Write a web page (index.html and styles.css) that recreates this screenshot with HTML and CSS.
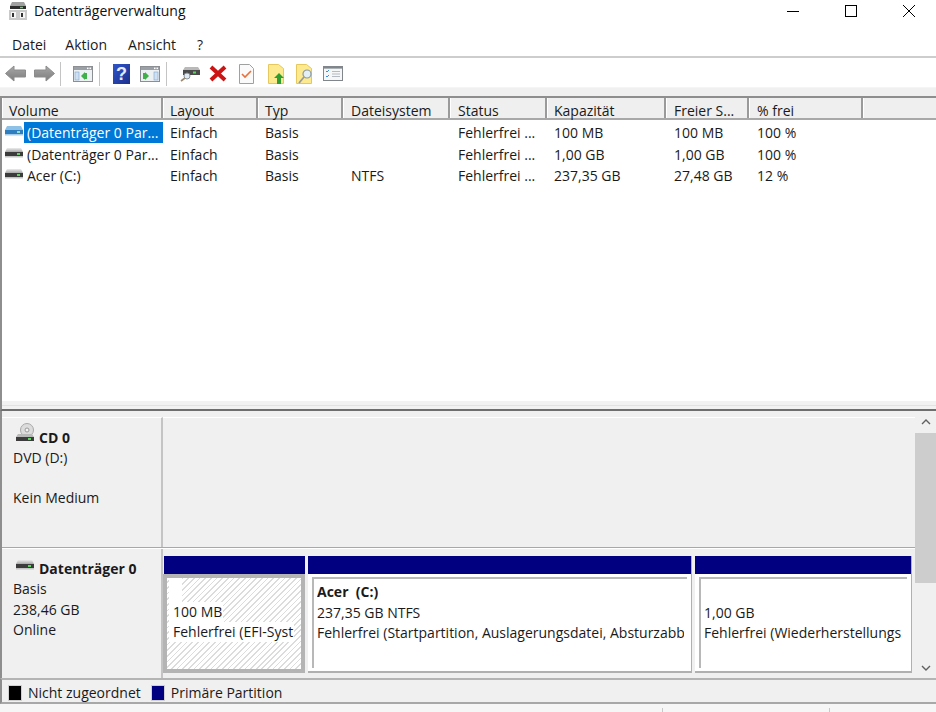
FILE: index.html
```html
<!DOCTYPE html>
<html lang="de">
<head>
  <meta charset="UTF-8">
  <title>Datenträgerverwaltung</title>
  <link rel="stylesheet" href="styles.css">
</head>
<body>
  <svg class="defs" width="0" height="0">
    <defs>
      <linearGradient id="drive-top" x1="0" y1="0" x2="0" y2="1"><stop offset="0" stop-color="#ececec"/><stop offset="1" stop-color="#a8a8a8"/></linearGradient>
      <linearGradient id="arrow-gray" x1="0" y1="0" x2="0" y2="1"><stop offset="0" stop-color="#a8a8a8"/><stop offset="1" stop-color="#7c7c7c"/></linearGradient>
      <linearGradient id="help-blue" x1="0" y1="0" x2="1" y2="1"><stop offset="0" stop-color="#2f55c8"/><stop offset="1" stop-color="#1c2f8c"/></linearGradient>
      <symbol id="drive" viewBox="0 0 18 10">
        <path d="M2 0h14l2 4H0z" fill="url(#drive-top)"/>
        <rect x="0" y="4" width="18" height="4" fill="#3c3c3c"/>
        <rect x="12" y="5" width="3" height="2" fill="#5fd35f"/>
        <rect x="0" y="8" width="18" height="1.500" fill="#c4c4c4"/>
      </symbol>
      <symbol id="drive-blue" viewBox="0 0 18 10">
        <path d="M2 0h14l2 4H0z" fill="#8fc0e6"/>
        <rect x="0" y="4" width="18" height="4" fill="#2f7fc0"/>
        <rect x="12" y="5" width="3" height="2" fill="#8fe0c0"/>
        <rect x="0" y="8" width="18" height="1.500" fill="#a8cce8"/>
      </symbol>
      <symbol id="window" viewBox="0 0 20 16">
        <rect x=".5" y=".5" width="19" height="15" fill="#eef1f4" stroke="#8b8f94"/>
        <rect x="1" y="1" width="18" height="3" fill="#9aa0a6"/>
        <rect x="14" y="1.600" width="1.500" height="1.500" fill="#fff"/>
        <rect x="16.500" y="1.600" width="1.500" height="1.500" fill="#fff"/>
      </symbol>
    </defs>
  </svg>

  <header class="titlebar">
    <svg class="app-icon" viewBox="0 0 18 18" width="18" height="18">
      <path d="M3 0h12l2 4H1z" fill="#a0a0a0"/>
      <rect x="1" y="4" width="16" height="3" fill="#2e2e2e"/>
      <rect x="11" y="4.800" width="3" height="1.400" fill="#5fd35f"/>
      <rect y="8" width="18" height="10" fill="#c9c9c9"/>
      <rect x="2" y="10" width="5" height="6" fill="#f6f6f6"/>
      <rect x="11" y="10" width="5" height="6" fill="#f6f6f6"/>
      <rect x="3" y="11" width="2" height="4" fill="#333"/>
      <rect x="12" y="11" width="2" height="4" fill="#333"/>
    </svg>
    <span class="title">Datenträgerverwaltung</span>
    <div class="window-buttons">
      <svg viewBox="0 0 12 12" width="12" height="12"><path d="M0 6.500h12" stroke="#000"/></svg>
      <svg viewBox="0 0 12 12" width="12" height="12"><rect x=".5" y=".5" width="11" height="11" fill="none" stroke="#000"/></svg>
      <svg viewBox="0 0 12 12" width="12" height="12"><path d="M0 0l12 12M12 0L0 12" stroke="#000"/></svg>
    </div>
  </header>

  <nav class="menubar">
    <span>Datei</span>
    <span>Aktion</span>
    <span>Ansicht</span>
    <span>?</span>
  </nav>

  <div class="toolbar">
    <svg class="tool tool-back" viewBox="0 0 21 17" width="21" height="17"><path d="M.5 8.500L9 1v4h11.500v7H9v4z" fill="url(#arrow-gray)" stroke="#8c8c8c"/></svg>
    <svg class="tool tool-forward" viewBox="0 0 21 17" width="21" height="17"><path d="M20.500 8.500L12 1v4H.5v7H12v4z" fill="url(#arrow-gray)" stroke="#8c8c8c"/></svg>
    <i class="tool-sep tool-sep-a"></i>
    <svg class="tool tool-pane" viewBox="0 0 20 16" width="20" height="16">
      <use href="#window"/>
      <rect x="2" y="6" width="4" height="8" fill="#cfe0f2" stroke="#7ea6cc" stroke-width=".6"/>
      <path d="M12 6v8l-4-4z" fill="#3fb04a"/>
      <rect x="12" y="7" width="2" height="6" fill="#3fb04a"/>
    </svg>
    <i class="tool-sep tool-sep-b"></i>
    <svg class="tool tool-help" viewBox="0 0 17 20" width="17" height="20">
      <rect width="17" height="20" fill="url(#help-blue)"/>
      <text x="8.500" y="16" class="help-mark">?</text>
    </svg>
    <svg class="tool tool-pane-b" viewBox="0 0 20 16" width="20" height="16">
      <use href="#window"/>
      <rect x="14" y="6" width="4" height="8" fill="#cfe0f2" stroke="#7ea6cc" stroke-width=".6"/>
      <path d="M5 6v8l4-4z" fill="#3fb04a"/>
      <rect x="3" y="7" width="2" height="6" fill="#3fb04a"/>
    </svg>
    <i class="tool-sep tool-sep-c"></i>
    <svg class="tool tool-connect" viewBox="0 0 20 16" width="20" height="16">
      <path d="M5 1h13l2 3H3z" fill="#b9b9b9"/>
      <rect x="3" y="4" width="17" height="5" fill="#4a4a4a"/>
      <rect x="13" y="5.500" width="3" height="2" fill="#5fd35f"/>
      <circle cx="7" cy="10" r="3" fill="#dfe9f2" stroke="#8a9099"/>
      <path d="M5 12l-4 3" stroke="#9a8a70" stroke-width="1.600"/>
    </svg>
    <svg class="tool tool-delete" viewBox="0 0 18 17" width="18" height="17"><path d="M2 2l14 13M16 2L2 15" stroke="#cc1414" stroke-width="4"/></svg>
    <svg class="tool tool-check" viewBox="0 0 15 20" width="15" height="20">
      <path d="M.5.5h10l4 4v15H.5z" fill="#fafafa" stroke="#a0a0a0"/>
      <path d="M3 10l3 3 6-6" fill="none" stroke="#e8703a" stroke-width="1.600"/>
    </svg>
    <svg class="tool tool-up" viewBox="0 0 16 20" width="16" height="20">
      <path d="M.5.5h10l5 4v15H.5z" fill="#fde98e" stroke="#e6c85e"/>
      <path d="M11 9l5 5h-3v6H9v-6H6z" fill="#2f9e2f"/>
    </svg>
    <svg class="tool tool-find" viewBox="0 0 17 20" width="17" height="20">
      <path d="M.5.5h10l5 4v15H.5z" fill="#fde98e" stroke="#e6c85e"/>
      <circle cx="11" cy="10" r="4" fill="#e4eef5" stroke="#8a9aa8" stroke-width="1.200"/>
      <path d="M8 13l-5 6" stroke="#9a9a9a" stroke-width="1.800"/>
    </svg>
    <svg class="tool tool-list" viewBox="0 0 20 15" width="20" height="15">
      <rect x=".5" y=".5" width="19" height="14" fill="#f4f6f8" stroke="#80868c"/>
      <rect x="1" y="1" width="18" height="1.600" fill="#80868c"/>
      <path d="M3 5l1 1 2-2M3 10l1 1 2-2" fill="none" stroke="#3a8ee0"/>
      <path d="M9 5.500h8M9 8h8M9 10.500h8" stroke="#b4bac0"/>
    </svg>
  </div>

  <div class="toolbar-gap"></div>

  <main class="volumes">
    <div class="vol-row vol-head">
      <span>Volume</span><span>Layout</span><span>Typ</span><span>Dateisystem</span><span>Status</span><span>Kapazität</span><span>Freier S...</span><span>% frei</span><span></span>
    </div>
    <div class="vol-row vol-item">
      <span class="vol-name"><svg class="vol-icon"><use href="#drive-blue"/></svg><b class="selected">(Datenträger 0 Par...</b></span><span>Einfach</span><span>Basis</span><span></span><span>Fehlerfrei ...</span><span>100 MB</span><span>100 MB</span><span>100 %</span><span></span>
    </div>
    <div class="vol-row vol-item">
      <span class="vol-name"><svg class="vol-icon"><use href="#drive"/></svg><b>(Datenträger 0 Par...</b></span><span>Einfach</span><span>Basis</span><span></span><span>Fehlerfrei ...</span><span>1,00 GB</span><span>1,00 GB</span><span>100 %</span><span></span>
    </div>
    <div class="vol-row vol-item">
      <span class="vol-name"><svg class="vol-icon"><use href="#drive"/></svg><b>Acer (C:)</b></span><span>Einfach</span><span>Basis</span><span>NTFS</span><span>Fehlerfrei ...</span><span>237,35 GB</span><span>27,48 GB</span><span>12 %</span><span></span>
    </div>
  </main>

  <div class="splitter"></div>

  <section class="disks">
    <div class="disk-list">
      <div class="disk disk-cd">
        <div class="disk-label">
          <div class="disk-name">
            <svg class="cd-icon" viewBox="0 0 18 19" width="18" height="19">
              <circle cx="11" cy="7" r="6.500" fill="#dcdcdc" stroke="#a8a8a8"/>
              <circle cx="11" cy="7" r="2" fill="#f4f4f4" stroke="#9a9a9a"/>
              <path d="M2 11h14l2 3H0z" fill="#b9b9b9"/>
              <rect y="14" width="18" height="4" fill="#3c3c3c"/>
              <rect x="12" y="15" width="3" height="2" fill="#5fd35f"/>
            </svg>
            <strong>CD 0</strong>
          </div>
          <p>DVD (D:)</p>
          <p>&nbsp;</p>
          <p>Kein Medium</p>
        </div>
        <div class="disk-area"></div>
      </div>
      <div class="disk disk-main">
        <div class="disk-label">
          <div class="disk-name">
            <svg class="hd-icon"><use href="#drive"/></svg>
            <strong>Datenträger 0</strong>
          </div>
          <p>Basis</p>
          <p>238,46 GB</p>
          <p>Online</p>
        </div>
        <div class="partitions">
          <div class="part part-efi">
            <div class="part-bar"></div>
            <div class="part-body">
              <span class="part-line"><span class="part-stub">&nbsp;</span></span>
              <span class="part-line"><span>100 MB</span></span>
              <span class="part-line"><span>Fehlerfrei (EFI-Syst</span></span>
            </div>
          </div>
          <div class="part part-c">
            <div class="part-bar"></div>
            <div class="part-body">
              <span class="part-line"><strong>Acer&nbsp; (C:)</strong></span>
              <span class="part-line">237,35 GB NTFS</span>
              <span class="part-line">Fehlerfrei (Startpartition, Auslagerungsdatei, Absturzabb</span>
            </div>
          </div>
          <div class="part part-rec">
            <div class="part-bar"></div>
            <div class="part-body">
              <span class="part-line">&nbsp;</span>
              <span class="part-line">1,00 GB</span>
              <span class="part-line">Fehlerfrei (Wiederherstellungs</span>
            </div>
          </div>
        </div>
      </div>
    </div>
    <div class="scrollbar">
      <svg viewBox="0 0 10 6" width="10" height="6"><path d="M1 5l4-4 4 4" fill="none" stroke="#606060" stroke-width="1.400"/></svg>
      <div class="scroll-track"><div class="scroll-thumb"></div></div>
      <svg viewBox="0 0 10 6" width="10" height="6"><path d="M1 1l4 4 4-4" fill="none" stroke="#606060" stroke-width="1.400"/></svg>
    </div>
  </section>

  <div class="legend">
    <i class="swatch swatch-black"></i><span>Nicht zugeordnet</span>
    <i class="swatch swatch-blue"></i><span>Primäre Partition</span>
  </div>

  <footer class="statusbar">
    <i class="status-cell-a"></i><i class="status-cell-b"></i>
  </footer>
</body>
</html>
```

FILE: styles.css
```css
* {
  box-sizing: border-box;
  margin: 0;
  padding: 0;
}
html, body {
  height: 100%;
  overflow: hidden;
}
body {
  display: flex;
  flex-direction: column;
  background: #fff;
  color: #1a1a1a;
  font-family: "Open Sans", "Noto Sans", Arial, sans-serif;
  font-size: 14px;
}
.defs {
  position: absolute;
}

/* title + menu */
.titlebar {
  flex: 0 0 30px;
  display: flex;
  align-items: center;
  padding: 0 21px 8px 9px;
  color: #111;
}
.app-icon {
  margin-right: 7px;
}
.title {
  flex: 1;
  margin-top: -2px;
}
.window-buttons {
  display: flex;
  gap: 46px;
  align-items: center;
}
.menubar {
  flex: 0 0 28px;
  display: flex;
  gap: 19px;
  padding: 3px 0 0 12px;
  align-items: center;
  border-bottom: 2px solid #cdcdcd;
}
.menubar span:nth-child(3) {
  margin: 0 2px;
}

/* toolbar */
.toolbar {
  flex: 0 0 29px;
  display: flex;
  align-items: center;
  padding: 2px 0 0 5px;
}
.tool-forward {
  margin-left: 8px;
}
.tool-sep {
  width: 1px;
  height: 24px;
  background: #c4c4c4;
}
.tool-sep-a {
  margin: 0 12px 0 5px;
}
.tool-sep-b {
  margin: 0 13px 0 6px;
}
.tool-sep-c {
  margin: 0 13px 0 6px;
}
.tool-help {
  margin-right: 10px;
}
.tool-delete {
  margin-left: 9px;
}
.tool-check {
  margin-left: 12px;
}
.tool-up {
  margin-left: 14px;
}
.tool-find {
  margin-left: 12px;
}
.tool-list {
  margin-left: 10px;
}
.help-mark {
  fill: #e8e8ff;
  font-family: "Liberation Sans", sans-serif;
  font-size: 18px;
  font-weight: bold;
  text-anchor: middle;
}
.toolbar-gap {
  flex: 0 0 9px;
  background: #f0f0f0;
  border-top: 1px solid #f5f5f5;
}

/* volume table */
.volumes {
  flex: 0 0 305px;
  background: #fff;
  border-left: 2px solid #8e8e8e;
  overflow: hidden;
}
.vol-row {
  display: grid;
  grid-template-columns: 161px 95px 85px 107px 97px 119px 83px 114px 1fr;
}
.vol-row > span {
  padding-left: 7px;
  white-space: nowrap;
  overflow: hidden;
}
.vol-row > span:nth-child(n+4) {
  padding-left: 8px;
}
.vol-row > span:nth-child(6) {
  padding-left: 7px;
}
.vol-head {
  height: 24px;
  grid-template-rows: 20px;
  background: #efefef;
  border-top: 2px solid #8e8e8e;
  border-bottom: 2px solid #a8a8a8;
}
.vol-row.vol-head > span {
  padding-top: 3px;
  line-height: 20px;
  overflow: visible;
  border-right: 2px solid #9a9a9a;
  box-shadow: inset 1px 0 #fff;
}
.vol-row.vol-head > span:last-child {
  border-right: none;
}
.vol-item {
  height: 21px;
  line-height: 21px;
}
.vol-item:nth-child(2) {
  margin-top: 2px;
}
.vol-item:nth-child(3) {
  margin-top: 1px;
}
.vol-row > .vol-name {
  display: flex;
  align-items: center;
  padding-left: 3px;
}
.vol-icon {
  flex: 0 0 18px;
  width: 18px;
  height: 10px;
  margin: -4px 1px 0 0;
}
.vol-name b {
  flex: 1;
  padding-left: 3px;
  font-weight: normal;
}
.vol-name .selected {
  background: #0078d7;
  color: #fff;
}

.splitter {
  flex: 0 0 10px;
  background: linear-gradient(#f2f2f2 4px, #e2e2e2 4px, #e2e2e2 5px, #f2f2f2 5px);
  border-left: 2px solid #8e8e8e;
  border-bottom: 2px solid #6e6e6e;
}

/* disk area */
.disks {
  flex: 0 0 267px;
  display: flex;
  background: #f0f0f0;
  border-left: 2px solid #8e8e8e;
}
.disk-list {
  flex: 1;
  min-width: 0;
  display: flex;
  flex-direction: column;
}
.disk {
  display: flex;
}
.disk-cd {
  flex: 0 0 137px;
  padding-top: 6px;
  border-bottom: 1px solid #a8a8a8;
}
.disk-main {
  flex: 1;
  min-height: 0;
  border-top: 1px solid #fff;
}
.disk-label {
  flex: 0 0 161px;
  padding: 10px 0 0 11px;
  border-top: 1px solid #fff;
  border-right: 2px solid #c4c4c4;
  line-height: 20px;
}
.disk-main .disk-label {
  border-top: none;
  line-height: 20.500px;
}
.disk-area {
  flex: 1;
  border-top: 1px solid #fff;
}
.disk-name {
  display: flex;
  align-items: flex-end;
  height: 20px;
}
.disk-name strong {
  font-weight: 700;
}
.cd-icon {
  flex: none;
  margin: 0 5px 6px 3px;
}
.hd-icon {
  flex: none;
  width: 18px;
  height: 10px;
  margin: 0 5px 9px 3px;
}

/* partitions */
.partitions {
  flex: 1;
  min-width: 0;
  display: flex;
  padding: 7px 3px 5px 1px;
  gap: 3px;
}
.part {
  min-width: 0;
  display: flex;
  flex-direction: column;
  background: #fff;
  border-right: 1px solid #b0b0b0;
  border-bottom: 2px solid #b0b0b0;
}
.part-efi {
  flex: 0 0 141px;
}
.part-c {
  flex: 0 0 384px;
}
.part-rec {
  flex: 1;
}
.part-bar {
  flex: 0 0 18px;
  background: #000080;
}
.part-body {
  flex: 1;
  padding: 3px 3px 0 3px;
  margin: 3px 4px 3px 4px;
  border-left: 2px solid #b8b8b8;
  border-top: 2px solid #b8b8b8;
  overflow: hidden;
  line-height: 20px;
}
.part-line {
  display: block;
  white-space: nowrap;
  overflow: hidden;
}
.part-line:first-child {
  height: 21px;
}
.part-line strong {
  font-weight: 700;
}
.part-efi {
  border: none;
  background: none;
}
.part-efi .part-body {
  margin: 0 0 0 -1px;
  padding: 0 2px 0 2px;
  border: 4px solid #b4b4b4;
  background: repeating-linear-gradient(135deg, #fff 0, #fff 2.800px, #dcdcdc 2.800px, #dcdcdc 4px);
}
.part-efi .part-line span {
  display: inline-block;
  padding: 0 1px 0 4px;
  background: #fff;
}
.part-efi .part-line:first-child {
  height: 24px;
}
.part-efi .part-line .part-stub {
  width: 13px;
  height: 24px;
  padding: 0;
}

/* scrollbar */
.scrollbar {
  flex: 0 0 21px;
  display: flex;
  flex-direction: column;
  align-items: center;
  padding: 8px 0 7px;
  background: #f0f0f0;
}
.scroll-track {
  flex: 1;
  width: 100%;
  padding-top: 8px;
}
.scroll-thumb {
  height: 150px;
  background: #cdcdcd;
}

/* legend + status */
.legend {
  flex: 0 0 25px;
  display: flex;
  align-items: center;
  padding: 3px 0 0 6px;
  background: #f0f0f0;
  border-top: 2px solid #b4b4b4;
  border-left: 2px solid #8e8e8e;
  border-bottom: 2px solid #a8a8a8;
}
.swatch {
  width: 14px;
  height: 16px;
  margin-right: 6px;
  border: 1px solid #d0d0d0;
}
.swatch-black {
  background: #000;
}
.swatch-blue {
  background: #000080;
  margin-left: 10px;
}
.statusbar {
  flex: 1;
  display: flex;
  padding-top: 4px;
  background: #f6f6f6;
}
.status-cell-a {
  flex: 0 0 663px;
  border-right: 1px solid #c8c8c8;
}
.status-cell-b {
  flex: 0 0 167px;
  border-right: 1px solid #c8c8c8;
}
```
